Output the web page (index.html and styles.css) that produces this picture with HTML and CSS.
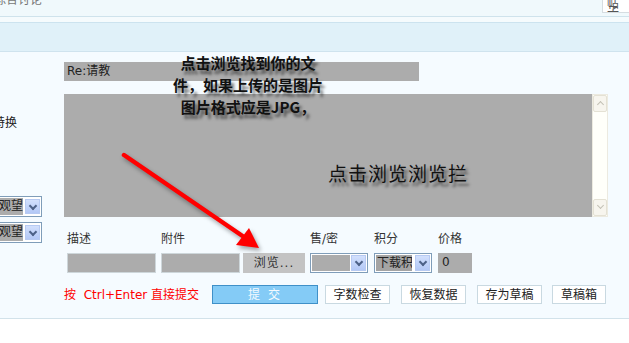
FILE: index.html
```html
<!DOCTYPE html>
<html lang="zh-CN">
<head>
  <meta charset="UTF-8">
  <title>发表回复</title>
  <link rel="stylesheet" href="styles.css">
</head>
<body>
<div class="page">

  <!-- header strips -->
  <div class="head">
    <div class="topbar">
      <span class="crumb">综合讨论</span>
      <span class="topbox">帖子</span>
    </div>
    <div class="band"></div>
  </div>

  <!-- reply form -->
  <div class="post">
    <div class="side">
      <div class="side-label">特换</div>
      <div class="side-select"><span class="opt">观望</span><span class="drop"></span></div>
      <div class="side-select second"><span class="opt">观望</span><span class="drop"></span></div>
    </div>

    <div class="form">
      <div class="subject">Re:请教</div>

      <div class="editor">
        <div class="editor-text"></div>
        <div class="scroll">
          <div class="scroll-btn up"></div>
          <div class="scroll-btn down"></div>
        </div>
      </div>

      <div class="fields labels">
        <span>描述</span>
        <span>附件</span>
        <span></span>
        <span>售/密</span>
        <span>积分</span>
        <span>价格</span>
      </div>

      <div class="fields">
        <div class="input desc"></div>
        <div class="input attach"></div>
        <div class="browse">浏览...</div>
        <div class="select"><span class="opt"></span><span class="drop"></span></div>
        <div class="select"><span class="opt dark">下载积</span><span class="drop"></span></div>
        <div class="input price">0</div>
      </div>

      <div class="actions">
        <span class="hint">按&nbsp; Ctrl+Enter 直接提交</span>
        <button class="submit">提 交</button>
        <button class="btn">字数检查</button>
        <button class="btn">恢复数据</button>
        <button class="btn">存为草稿</button>
        <button class="btn narrow">草稿箱</button>
      </div>
    </div>

    <!-- annotations drawn over the screenshot -->
    <div class="note note-top">点击浏览找到你的文<br>件，如果上传的是图片<br>图片格式应是JPG，</div>
    <div class="note note-mid">点击浏览浏览拦</div>
    <svg class="pointer" width="300" height="220" viewBox="0 0 300 220">
      <line x1="124" y1="103" x2="244" y2="185" stroke="#f00" stroke-width="4.5" stroke-linecap="round"/>
      <polygon points="259,196 236,193 249,176" fill="#f00"/>
    </svg>
  </div>

  <div class="foot"><span>门</span></div>
</div>
</body>
</html>
```

FILE: styles.css
```css
body {
  margin: 0;
  font: 12px/14px "DejaVu Sans", "Noto Sans CJK SC", sans-serif;
  color: #333;
  background: #fff;
}

.page {
  width: 629px;
  height: 343px;
  overflow: hidden;
}

/* header */
.head {
  background: #f5fbfd;
}

.topbar {
  height: 16px;
  background: #f0f9fc;
  border-bottom: 1px solid #cfe3ec;
  display: flex;
  justify-content: space-between;
  align-items: flex-start;
  overflow: hidden;
}

.crumb {
  margin-top: -7px;
  margin-left: -6px;
  color: #777;
}

.topbox {
  width: 22px;
  height: 12px;
  padding-left: 4px;
  background: #fff;
  border-left: 1px solid #d6dde1;
  border-bottom: 1px solid #d6dde1;
  color: #555;
  line-height: 8px;
  overflow: hidden;
}

.band {
  margin-top: 5px;
  height: 28px;
  background: #e0f1f9;
  border-top: 1px solid #cce3ef;
  border-bottom: 1px solid #cfe3ee;
}

/* form area */
.post {
  position: relative;
  display: grid;
  grid-template-columns: 64px 1fr;
  height: 266px;
  background: #f5fbff;
  border-bottom: 1px solid #d2e2ea;
}

.side {
  overflow: hidden;
  padding-top: 64px;
}

.side-label {
  text-indent: -7px;
  color: #222;
}

.side-select {
  display: flex;
  width: 42px;
  height: 17px;
  margin-top: 66px;
  margin-left: -4px;
  padding: 1px;
  border: 1px solid #7f9db9;
  background: #fff;
}

.side-select.second {
  margin-top: 5px;
}

.opt {
  flex: 1;
  background: #acacac;
  color: #222;
  line-height: 17px;
  padding-left: 1px;
  white-space: nowrap;
  overflow: hidden;
}

.opt.dark {
  background: #a4a4a4;
  margin-right: 2px;
}

.drop {
  width: 15px;
  height: 15px;
  margin: 1px 0 0 2px;
  background: linear-gradient(#d2e0fd, #b3c8f6);
  border: 1px solid #b7caf2;
  box-sizing: border-box;
  position: relative;
}

.drop::after {
  content: "";
  position: absolute;
  left: 4px;
  top: 3px;
  width: 4px;
  height: 4px;
  border-right: 2px solid #4d6288;
  border-bottom: 2px solid #4d6288;
  transform: rotate(45deg);
}

.form {
  padding-top: 10px;
}

.subject {
  width: 352px;
  height: 19px;
  padding-left: 3px;
  background: #acacac;
  color: #222;
  line-height: 19px;
}

.editor {
  display: flex;
  width: 544px;
  height: 123px;
  margin-top: 13px;
}

.editor-text {
  flex: 1;
  background: #acacac;
}

.scroll {
  width: 16px;
  background: #fffffa;
  border: 1px solid #eceae0;
  box-sizing: border-box;
  display: flex;
  flex-direction: column;
  justify-content: space-between;
}

.scroll-btn {
  height: 15px;
  background: #f7f5ee;
  border: 1px solid #e4e1d4;
  border-radius: 2px;
  position: relative;
}

.scroll-btn::after {
  content: "";
  position: absolute;
  left: 4px;
  width: 4px;
  height: 4px;
  border-left: 1px solid #c3c1b6;
  border-top: 1px solid #c3c1b6;
}

.scroll-btn.up::after {
  top: 6px;
  transform: rotate(45deg);
}

.scroll-btn.down::after {
  top: 3px;
  transform: rotate(225deg);
}

.fields {
  display: grid;
  grid-template-columns: 94px 82px 67px 64px 64px 34px;
  align-items: center;
  height: 20px;
  margin-top: 7px;
  padding-left: 3px;
}

.fields.labels {
  height: 14px;
  margin-top: 15px;
  color: #333;
}

.input {
  height: 20px;
  background: #acacac;
  border: 1px solid #cdd6da;
  box-sizing: border-box;
}

.desc {
  width: 89px;
}

.attach {
  width: 79px;
}

.price {
  width: 34px;
  padding-left: 4px;
  line-height: 18px;
  color: #222;
  border: none;
}

.browse {
  width: 62px;
  height: 20px;
  background: #c3c3c3;
  color: #333;
  text-align: center;
  line-height: 20px;
  letter-spacing: 1px;
}

.select {
  display: flex;
  height: 20px;
  width: 58px;
  padding: 1px;
  border: 1px solid #7f9db9;
  box-sizing: border-box;
  background: #fff;
}

.select .opt {
  line-height: 16px;
}

.select .drop {
  margin: 0 0 0 1px;
  height: 16px;
}

.actions {
  display: flex;
  align-items: center;
  gap: 11px;
  margin-top: 12px;
}

.hint {
  width: 137px;
  color: #f00;
  white-space: nowrap;
}

button {
  height: 19px;
  padding: 0;
  font: inherit;
  cursor: pointer;
}

.submit {
  width: 106px;
  margin-right: -4px;
  background: #84cbf6;
  border: 1px solid #3f90c8;
  color: #f4faff;
  letter-spacing: 2px;
}

.btn {
  width: 65px;
  background: #fff;
  border: 1px solid #c9d9e1;
  color: #222;
}

.btn.narrow {
  width: 54px;
  margin-left: -1px;
}

/* annotations */
.note {
  position: absolute;
  color: #111;
  text-shadow: 3px 4px 3px rgba(0, 0, 0, 0.55);
  font-family: "Noto Sans CJK SC", sans-serif;
}

.note-top {
  left: 163px;
  top: 0;
  width: 170px;
  text-align: center;
  font-size: 15px;
  font-weight: bold;
  line-height: 22px;
}

.note-mid {
  left: 328px;
  top: 110px;
  font-size: 19px;
  line-height: 22px;
  letter-spacing: 1px;
}

.pointer {
  position: absolute;
  left: 0;
  top: 0;
  pointer-events: none;
  filter: drop-shadow(2px 3px 2px rgba(0, 0, 0, 0.35));
}

.foot {
  display: flex;
  justify-content: flex-end;
  padding-top: 7px;
}

.foot span {
  margin-right: -14px;
  font-family: "Noto Sans CJK SC", sans-serif;
  font-size: 14px;
  color: #111;
}
```
